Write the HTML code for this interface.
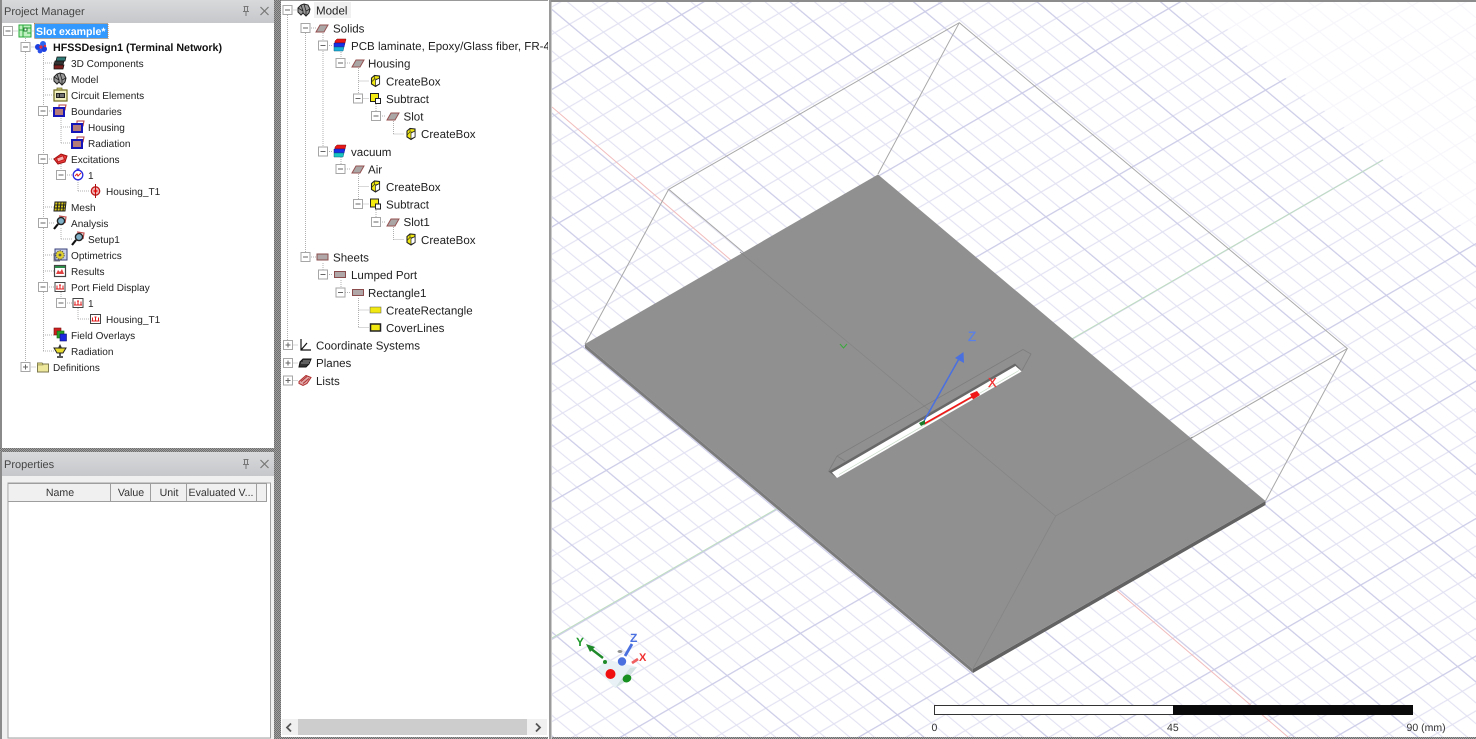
<!DOCTYPE html>
<html><head><meta charset="utf-8"><title>Slot example</title>
<style>
html,body{margin:0;padding:0;background:#fff;width:1476px;height:739px;overflow:hidden}
svg{display:block;filter:blur(.3px)}
text{font-family:"Liberation Sans",sans-serif;fill:#222;text-rendering:geometricPrecision}
.l{font-size:10.05px}
.r{font-size:11.55px}
.h{font-size:10.6px;fill:#333}
.t{font-size:11px;fill:#444}
.d{stroke:#b0b0b0;stroke-width:1;stroke-dasharray:1 1;fill:none}
</style></head><body>
<svg xmlns="http://www.w3.org/2000/svg" width="1476" height="739" viewBox="0 0 1476 739">
<defs>
<linearGradient id="tb" x1="0" y1="0" x2="0" y2="1"><stop offset="0" stop-color="#d8d9db"/><stop offset="1" stop-color="#c5c7ca"/></linearGradient>
<pattern id="hatch" width="2" height="2" patternUnits="userSpaceOnUse"><rect width="2" height="2" fill="#a0a0a0"/><rect width="1" height="1" fill="#6e6e6e"/><rect x="1" y="1" width="1" height="1" fill="#6e6e6e"/></pattern>
<pattern id="grid" width="5" height="5" patternUnits="userSpaceOnUse" patternTransform="matrix(14.65,-8.45,19.4,16.3,922,425)">
<g fill="#e2e2f3"><rect x="1" width=".07" height="5"/><rect x="2" width=".07" height="5"/><rect x="3" width=".07" height="5"/><rect x="4" width=".07" height="5"/><rect y="1" width="5" height=".05"/><rect y="2" width="5" height=".05"/><rect y="3" width="5" height=".05"/><rect y="4" width="5" height=".05"/></g>
<g fill="#cdcde9"><rect width=".08" height="5"/><rect width="5" height=".055"/></g>
</pattern>
<pattern id="gridl" width="5" height="5" patternUnits="userSpaceOnUse" patternTransform="matrix(14.65,-8.45,19.4,16.3,922,425)">
<g fill="#f6f6fb"><rect x="1" width=".07" height="5"/><rect x="2" width=".07" height="5"/><rect x="3" width=".07" height="5"/><rect x="4" width=".07" height="5"/><rect y="1" width="5" height=".05"/><rect y="2" width="5" height=".05"/><rect y="3" width="5" height=".05"/><rect y="4" width="5" height=".05"/><rect width=".07" height="5"/><rect width="5" height=".05"/></g>
</pattern>
<clipPath id="vp"><rect x="552" y="2" width="924" height="735"/></clipPath>

<g id="m"><rect x="-4.5" y="-4.5" width="9" height="9" fill="#fff" stroke="#a6a6a6"/><path d="M-2.5 0H2.5" stroke="#666"/></g>
<g id="p"><rect x="-4.5" y="-4.5" width="9" height="9" fill="#fff" stroke="#a6a6a6"/><path d="M-2.5 0H2.5M0-2.5V2.5" stroke="#666"/></g>

<g id="proj"><rect x="-6" y="-6" width="12" height="12" fill="#bff0bf" stroke="#27a83a"/><path d="M-2-6V6M2-3H6M2 2H6M-6-1H-2" stroke="#27a83a"/><rect x="-1" y="-3" width="3" height="3" fill="#fff" stroke="#1c7c2c"/></g>
<g id="des"><circle cx="-3" cy="0" r="3" fill="#1b3fe0"/><circle cx="2" cy="-3" r="3" fill="#2b62f0"/><circle cx="3" cy="2" r="3" fill="#1b3fe0"/><circle cx="-1" cy="4" r="2.4" fill="#2b50e8"/><circle cx="0" cy="0" r="1.6" fill="#e03040"/><circle cx="4" cy="-1" r="1.2" fill="#e03040"/></g>
<g id="c3d"><path d="M-3-6H6L5-2H-4Z" fill="#2e7a76" stroke="#111" stroke-width=".7"/><path d="M-5-2H4L3 2H-6Z" fill="#333" stroke="#111" stroke-width=".7"/><path d="M-6 2H4L3 6H-6Z" fill="#7a1f1f" stroke="#111" stroke-width=".7"/></g>
<g id="model"><path d="M-6-2-3-5 0-6 4-5 6-1 5 3 2 6-1 3-3 5-6 2Z" fill="#999" stroke="#222"/><path d="M-3-5-1 1V3M0-6 2 1 2 6M6-1 2 1M-6-2-1 1" stroke="#222" fill="none" stroke-width=".8"/></g>
<g id="circ"><rect x="-6" y="-5" width="13" height="11" fill="#f0efc0" stroke="#6d6a20" stroke-width="1.2"/><rect x="-3" y="-7" width="5" height="2" fill="#c8c470" stroke="#6d6a20" stroke-width=".7"/><rect x="-4" y="-2" width="9" height="5" fill="#222"/><path d="M-2-1V2M1-1V2M3-1V2" stroke="#eee" stroke-width=".8"/></g>
<g id="bnd"><path d="M-1-6 6-6 5-1H-1Z" fill="none" stroke="#b04040"/><rect x="-6" y="-3" width="10" height="8" fill="#b47a7a" stroke="#1414b8" stroke-width="2"/></g>
<g id="exc"><path d="M-6 0 1-5 7-3 5 3-2 5Z" fill="#e83a3a" stroke="#a01010"/><rect x="-3" y="-2" width="7" height="4" fill="#f4b0b0" stroke="#c01818" transform="rotate(-20)"/></g>
<g id="ex1"><circle r="4.8" fill="#fff" stroke="#2a2ae0" stroke-width="1.3"/><path d="M-3 1-1-1 0 1 3-2" stroke="#e02020" fill="none"/><path d="M-1.5-6H1.5" stroke="#2a2ae0"/></g>
<g id="tgt"><circle r="4.2" fill="#f4b8b8" stroke="#c01818" stroke-width="1.3"/><path d="M0-7V-2M0 2V7" stroke="#b01010"/><path d="M-2 0H2M0-2V2" stroke="#e00000" stroke-width="1.3"/></g>
<g id="mesh"><path d="M-5-5H6L5 4H-6Z" fill="#d8c818" stroke="#222"/><path d="M-2-5-3 4M1-5 0 4M4-5 3 4M-5.5-2H6M-5.5 1H5.5" stroke="#222" stroke-width="1.1"/></g>
<g id="ana"><path d="M-1-7 6-6 5 0" fill="none" stroke="#c05050" stroke-width="1.2"/><circle cx="1" cy="-2" r="3.6" fill="#7fb0c8" stroke="#222" stroke-width="1.4"/><path d="M-2 1-6 6" stroke="#111" stroke-width="2.2"/></g>
<g id="opt"><rect x="-5" y="-6" width="12" height="11" fill="#c9d0e8" stroke="#39407a"/><circle cx="0" cy="0" r="4.2" fill="#e0d030" stroke="#555" stroke-dasharray="1.4 1"/><circle r="1.4" fill="#555"/><path d="M-6-2V6H0" stroke="#888" fill="none"/></g>
<g id="res"><rect x="-5.5" y="-5.5" width="11" height="11" fill="#fff" stroke="#444" stroke-width="1.2"/><path d="M-5-5H5V-3H-5Z" fill="#2e8c4a"/><path d="M-4 3-2-1 0 1 2-2 4 3Z" fill="#e04040"/></g>
<g id="pfd"><rect x="-5" y="-4.5" width="10" height="9" fill="#fff" stroke="#444"/><path d="M-3 2V-1M0 2V-2M3 2V-1M-3.5-1H-2.500M-1-2H1M2.500-1H3.500M-4 2H4" stroke="#e01818"/></g>
<g id="ovl"><rect x="-6" y="-7" width="7" height="7" fill="#d02020" stroke="#701010" stroke-width=".6"/><rect x="-3" y="-4" width="7" height="7" fill="#28a028" stroke="#106010" stroke-width=".6"/><rect x="0" y="-1" width="6.500" height="7" fill="#1c28e0" stroke="#101070" stroke-width=".6"/></g>
<g id="rad"><path d="M-6-3H6L3 2H-3Z" fill="#e8dc30" stroke="#222"/><path d="M0-7-2-3H2Z" fill="#333"/><path d="M0 2V5M-3 6H3" stroke="#222" stroke-width="1.5"/></g>
<g id="fold"><path d="M-5.500-4H-1L0-3H5.500V5H-5.500Z" fill="#ece79a" stroke="#7d7a50"/><path d="M-5.500-4H-1L0-2H-5.500Z" fill="#d8d278" stroke="#7d7a50" stroke-width=".6"/></g>
<g id="sol"><path d="M-6 4-2-3H6L2 4Z" fill="#aaa6a6" stroke="#955252"/></g>
<g id="mat"><path d="M-5-5-3-7H6L5-3H-5Z" fill="#e81818" stroke="#801010" stroke-width=".5"/><path d="M-6-3H5L4 1H-6Z" fill="#1830e8" stroke="#101080" stroke-width=".5"/><path d="M-6 1H4L3 5H-6Z" fill="#18b0d8" stroke="#106080" stroke-width=".5"/></g>
<g id="mat2"><path d="M-5-5-3-7H6L5-3H-5Z" fill="#e81818" stroke="#801010" stroke-width=".5"/><path d="M-6-3H5L4 1H-6Z" fill="#1830e8" stroke="#101080" stroke-width=".5"/><path d="M-6 1H4L3 5H-6Z" fill="#18c8c0" stroke="#106080" stroke-width=".5"/></g>
<g id="box"><path d="M-4-3-1-5.500 4-5V3L0 5.500-4 3Z" fill="#f0e810" stroke="#222" stroke-width="1.100"/><path d="M-1-5.500V-2L-4 1M-1-2H4" stroke="#222" stroke-width=".6" fill="none"/><path d="M0-1V5 L4 3V-3Z" fill="#fff" stroke="#222" stroke-width=".7"/></g>
<g id="sub"><rect x="-5" y="-5" width="8" height="8" fill="#f4ec10" stroke="#222"/><rect x="0" y="0" width="5" height="5" fill="#fff" stroke="#222"/></g>
<g id="sht"><rect x="-5.500" y="-3" width="11" height="6" fill="#b0a8a8" stroke="#8a4c4c"/></g>
<g id="crr"><rect x="-5.500" y="-3" width="11" height="6" fill="#f0e810" stroke="#555" stroke-width=".5"/></g>
<g id="cov"><rect x="-5" y="-3.500" width="10" height="7" fill="#f0e810" stroke="#222" stroke-width="1.500"/></g>
<g id="cs"><path d="M-4-6V5H6M-4 5 2-2" stroke="#111" fill="none" stroke-width="1.200"/></g>
<g id="pl"><path d="M-5-1-2-4H6L4 1 1 4H-6Z" fill="#333" stroke="#111"/><path d="M-4 0H4M-2-2H5" stroke="#aaa" stroke-width=".7"/></g>
<g id="lst"><path d="M-6 1 1-5 6-3 2 3-2 5-6 3Z" fill="#e0a8a8" stroke="#b03030"/><path d="M-4 1 2-4M-2 3 4-2" stroke="#b03030"/></g>
</defs>

<!-- frame -->
<rect width="1476" height="739" fill="#fff"/>
<rect x="0" y="0" width="2" height="739" fill="#8a8a8a"/>
<rect x="2" y="0" width="273" height="23" fill="url(#tb)"/>
<rect x="0" y="448" width="281" height="4" fill="url(#hatch)"/>
<rect x="274" y="0" width="7" height="739" fill="url(#hatch)"/>
<rect x="2" y="452" width="272" height="24" fill="url(#tb)"/>
<rect x="2" y="476" width="272" height="263" fill="#f0f0f0"/>
<rect x="8" y="483" width="262.500" height="255" fill="#fff" stroke="#a0a0a0"/>

<text x="4" y="15" class="t">Project Manager</text>
<text x="4" y="468" class="t">Properties</text>
<g fill="none" stroke="#777">
<path d="M243.500 6.500H248.500M244.500 6.500V11.500M247.500 6.500V11.500M243 11.500H249M246 12V16"/>
<path d="M260.500 7 268.500 15M268.500 7 260.500 15" stroke-width="1.200"/>
<path d="M243.500 459.500H248.500M244.500 459.500V464.500M247.500 459.500V464.500M243 464.500H249M246 465V469"/>
<path d="M260.500 460 268.500 468M268.500 460 260.500 468" stroke-width="1.200"/>
</g>

<!-- properties header -->
<rect x="9" y="484" width="257" height="17" fill="#f0f0f0"/>
<path d="M8.500 483.500H267M8.500 501.500H267M110.500 484V501M150.500 484V501M186.500 484V501M256.500 484V501M266.500 484V501" stroke="#9e9e9e" fill="none"/>
<g class="h" text-anchor="middle"><text x="60" y="496" class="h">Name</text><text x="131" y="496" class="h">Value</text><text x="169" y="496" class="h">Unit</text><text x="221" y="496" class="h">Evaluated V...</text></g>

<!-- left tree lines -->
<path class="d" d="M25.500 38V363M43.500 54V351M61 116V143M61 164V170M78 180V191M61 228V239M61 292V298M78 308V319M8.500 31H34M25.500 47H36M43 63H54M43 79H54M43 95H54M43 111H54M61 127H72M61 143H72M43 159H54M61 175H72M78 191H90M43 207H54M43 223H54M61 239H72M43 255H54M43 271H54M43 287H54M61 303H72M78 319H90M43 335H54M43 351H54M25.500 367H36"/>

<use href="#m" x="8" y="31"/><use href="#proj" x="25" y="31"/>
<rect x="34.500" y="23.500" width="73.500" height="15" fill="#3399ff" stroke="#c08040" stroke-dasharray="1 1"/>
<text x="36" y="35" class="l" style="fill:#fff;font-weight:bold;font-size:10.600px">Slot example*</text>
<use href="#m" x="25.500" y="47"/><use href="#des" x="41" y="47"/><text x="53" y="51" class="l" style="font-weight:bold;fill:#111;font-size:10.700px">HFSSDesign1 (Terminal Network)</text>
<use href="#c3d" x="60" y="63"/><text x="71" y="67" class="l">3D Components</text>
<use href="#model" x="60" y="79"/><text x="71" y="83" class="l">Model</text>
<use href="#circ" x="60" y="95"/><text x="71" y="99" class="l">Circuit Elements</text>
<use href="#m" x="43" y="111"/><use href="#bnd" x="60" y="111"/><text x="71" y="115" class="l">Boundaries</text>
<use href="#bnd" x="78" y="127"/><text x="88" y="131" class="l">Housing</text>
<use href="#bnd" x="78" y="143"/><text x="88" y="147" class="l">Radiation</text>
<use href="#m" x="43" y="159"/><use href="#exc" x="60" y="159"/><text x="71" y="163" class="l">Excitations</text>
<use href="#m" x="61" y="175"/><use href="#ex1" x="78" y="175"/><text x="88" y="179" class="l">1</text>
<use href="#tgt" x="95.500" y="191"/><text x="106" y="195" class="l">Housing_T1</text>
<use href="#mesh" x="60" y="207"/><text x="71" y="211" class="l">Mesh</text>
<use href="#m" x="43" y="223"/><use href="#ana" x="60" y="223"/><text x="71" y="227" class="l">Analysis</text>
<use href="#ana" x="78" y="239"/><text x="88" y="243" class="l">Setup1</text>
<use href="#opt" x="60" y="255"/><text x="71" y="259" class="l">Optimetrics</text>
<use href="#res" x="60" y="271"/><text x="71" y="275" class="l">Results</text>
<use href="#m" x="43" y="287"/><use href="#pfd" x="60" y="287"/><text x="71" y="291" class="l">Port Field Display</text>
<use href="#m" x="61" y="303"/><use href="#pfd" x="78" y="303"/><text x="88" y="307" class="l">1</text>
<use href="#pfd" x="95.500" y="319"/><text x="106" y="323" class="l">Housing_T1</text>
<use href="#ovl" x="60" y="335"/><text x="71" y="339" class="l">Field Overlays</text>
<use href="#rad" x="60" y="351"/><text x="71" y="355" class="l">Radiation</text>
<use href="#p" x="25.500" y="367"/><use href="#fold" x="43" y="367"/><text x="53" y="371" class="l">Definitions</text>

<!-- middle tree -->
<rect x="281" y="0" width="268" height="1" fill="#999"/>
<rect x="314" y="2" width="37" height="16" fill="#f0f0f0"/>
<path class="d" d="M287.500 15V341M305.500 33V253M323 33V147M341 52V58M358.500 68V94M376 104V112M393.500 121V134M341 157V164M358.500 174V200M376 210V218M393.500 227V240M323 263V270M341 280V287M358.500 298V328M287.500 10H298M305 28H316M323 45.500H333M341 63H351M358.500 81H369M358.500 98.500H369M376 116H386M393.500 134H404M323 151.500H333M341 169H351M358.500 186.500H369M358.500 204H369M376 222H386M393.500 239.500H404M305 257H316M323 274.500H333M341 292.500H351M358.500 310H369M358.500 327.500H369M287.500 345H298M287.500 363H298M287.500 380.500H298"/>

<use href="#m" x="287.500" y="10"/><use href="#model" x="304" y="10"/><text x="316" y="14.500" class="r">Model</text>
<use href="#m" x="305.500" y="28"/><use href="#sol" x="322" y="28"/><text x="333" y="32.500" class="r">Solids</text>
<use href="#m" x="323" y="45.500"/><use href="#mat" x="340" y="46"/><text x="351" y="50" class="r">PCB laminate, Epoxy/Glass fiber, FR-4</text>
<use href="#m" x="340.500" y="63"/><use href="#sol" x="358" y="63"/><text x="368" y="67.500" class="r">Housing</text>
<use href="#box" x="375.500" y="81"/><text x="386" y="85.500" class="r">CreateBox</text>
<use href="#m" x="358" y="98.500"/><use href="#sub" x="375.500" y="98.500"/><text x="386" y="103" class="r">Subtract</text>
<use href="#m" x="376" y="116"/><use href="#sol" x="393" y="116"/><text x="403.500" y="120.500" class="r">Slot</text>
<use href="#box" x="411" y="134"/><text x="421" y="138" class="r">CreateBox</text>
<use href="#m" x="323" y="151.500"/><use href="#mat2" x="340" y="152"/><text x="351" y="156" class="r">vacuum</text>
<use href="#m" x="340.500" y="169"/><use href="#sol" x="358" y="169"/><text x="368" y="173.500" class="r">Air</text>
<use href="#box" x="375.500" y="186.500"/><text x="386" y="191" class="r">CreateBox</text>
<use href="#m" x="358" y="204"/><use href="#sub" x="375.500" y="204"/><text x="386" y="208.500" class="r">Subtract</text>
<use href="#m" x="376" y="222"/><use href="#sol" x="393" y="222"/><text x="403.500" y="226" class="r">Slot1</text>
<use href="#box" x="411" y="239.500"/><text x="421" y="244" class="r">CreateBox</text>
<use href="#m" x="305.500" y="257"/><use href="#sht" x="322.500" y="257"/><text x="333" y="261.500" class="r">Sheets</text>
<use href="#m" x="323" y="274.500"/><use href="#sht" x="340" y="274.500"/><text x="351" y="279" class="r">Lumped Port</text>
<use href="#m" x="340.500" y="292.500"/><use href="#sht" x="358" y="292.500"/><text x="368" y="297" class="r">Rectangle1</text>
<use href="#crr" x="375.500" y="310"/><text x="386" y="314.500" class="r">CreateRectangle</text>
<use href="#cov" x="375.500" y="327.500"/><text x="386" y="332" class="r">CoverLines</text>
<use href="#p" x="288" y="345"/><use href="#cs" x="305" y="345"/><text x="316" y="349.500" class="r">Coordinate Systems</text>
<use href="#p" x="288" y="363"/><use href="#pl" x="305" y="363"/><text x="316" y="367" class="r">Planes</text>
<use href="#p" x="288" y="380.500"/><use href="#lst" x="305" y="380.500"/><text x="316" y="385" class="r">Lists</text>

<!-- scrollbar -->
<rect x="282" y="719" width="265" height="16" fill="#f0f0f0"/>
<rect x="298" y="719" width="229" height="16" fill="#cdcdcd"/>
<path d="M291 723.500 287 727.500 291 731.500M536 723.500 540 727.500 536 731.500" fill="none" stroke="#555" stroke-width="1.800"/>
<rect x="274" y="737" width="1202" height="2" fill="url(#hatch)"/>

<!-- viewport divider -->
<rect x="548" y="0" width="4" height="739" fill="#fff"/>
<rect x="549" y="0" width="2.500" height="739" fill="#9a9a9a"/>

<!-- 3D viewport -->
<g clip-path="url(#vp)">
<rect x="552" y="2" width="924" height="735" fill="#fff"/>
<path d="M552 2H1195L1476 238V737H552Z" fill="url(#grid)"/>
<path d="M1195 2H1476V238Z" fill="url(#gridl)"/>
<path d="M552 107 1288 737" stroke="#f2bcbc" fill="none"/>
<path d="M922 425 1383 160M922 425 552 638" stroke="#bfe0bf" fill="none"/>

<!-- air box upper -->
<path d="M668.700 189.300 959.300 22.700 1347.300 348.500 1055.700 516ZM959.300 22.700 878 174M1347.300 348.500 1265.500 501M668.700 189.300 585 344" fill="none" stroke="#a8a8a8"/>

<!-- plate -->
<path d="M585 344 972.800 669 973 673 585 348Z" fill="#7c7c7c"/>
<path d="M972.800 669 1265.500 501 1265.500 505 973 673Z" fill="#626262"/>
<path d="M878 174.500 1265.500 501 972.800 669 585 344Z" fill="#909090"/>
<path d="M740 252 1055.700 516 1192.500 437M1055.700 516 972.800 669" fill="none" stroke="#858585" stroke-width=".8"/>

<!-- slot -->
<path d="M837 456 1023 349.500 1031 354 1022 370.500M837 456 828.500 471.500M837 456 845 461" fill="none" stroke="#7d7d7d" stroke-width=".8"/>
<path d="M828.500 471.500 1015 363.500 1022 370.500 1015.500 366.500 833 472 837 478Z" fill="#686868"/>
<path d="M832 472.500 1015.500 366 1021.500 371.500 837 478Z" fill="#fff"/>
<path d="M839 474.500 1019 370.500" stroke="#c8dcc8" stroke-width=".7" fill="none"/>

<!-- axes -->
<path d="M924 424 977 394" stroke="#f01818" stroke-width="1.800" fill="none"/>
<path d="M970 394 977 391 980 395 973 399.500Z" fill="#f01818"/>
<path d="M924 421 960 357" stroke="#4a70e0" stroke-width="1.500" fill="none"/>
<path d="M963.500 352 964 363 955 358Z" fill="#4a70e0"/>
<path d="M919 423 925 420 925 424 921 426Z" fill="#1a7a2a"/>
<text x="968" y="341" style="font-size:13.500px;fill:#5a80e8;stroke:#5a80e8;stroke-width:.3">Z</text>
<text x="988" y="387" style="font-size:13px;fill:#f03030;stroke:#f03030;stroke-width:.3">X</text>
<path d="M840 344 843.500 348 847 344" stroke="#3aa83a" fill="none"/>

<!-- triad -->
<path d="M598 670 605 659 637 667 625 682 615 688Z" fill="#e8f2f6"/>
<path d="M615 688 625 682 637 667 630 668 620 681Z" fill="#d4e2e4"/>
<path d="M603 658 590 648" stroke="#1f8a2a" stroke-width="2.400" fill="none"/>
<path d="M586 644 595 647 590 652Z" fill="#1f8a2a"/>
<circle cx="605" cy="662" r="2" fill="#1f8a2a"/>
<ellipse cx="620" cy="651.500" rx="2.500" ry="1.500" fill="#909090"/>
<path d="M625 656 632 644" stroke="#4a70e0" stroke-width="2.800" fill="none"/>
<circle cx="622" cy="661.500" r="4.200" fill="#4a70e0"/>
<path d="M632 663 638 659" stroke="#f06060" stroke-width="2.800" fill="none"/>
<circle cx="610.500" cy="674" r="5" fill="#f01010"/>
<ellipse cx="627" cy="678.500" rx="4.500" ry="3.800" fill="#18901f" transform="rotate(-30 627 678.500)"/>
<text x="576" y="646" style="font-size:12px;font-weight:bold;fill:#1f9a2a">Y</text>
<text x="630" y="642" style="font-size:12px;font-weight:bold;fill:#4a70e0">Z</text>
<text x="639" y="661" style="font-size:11px;font-weight:bold;fill:#f03030">X</text>

<!-- scale bar -->
<rect x="934.500" y="705.500" width="239" height="9" fill="#fff" stroke="#333"/>
<rect x="1173" y="705" width="240" height="10" fill="#0a0a0a"/>
<text x="931.500" y="731" style="font-size:10.500px;fill:#333">0</text>
<text x="1167" y="731" style="font-size:10.500px;fill:#333">45</text>
<text x="1406.500" y="731" style="font-size:10.500px;fill:#333">90 (mm)</text>
</g>
<rect x="551" y="0" width="925" height="2" fill="#8c8c8c"/>
</svg>
</body></html>
